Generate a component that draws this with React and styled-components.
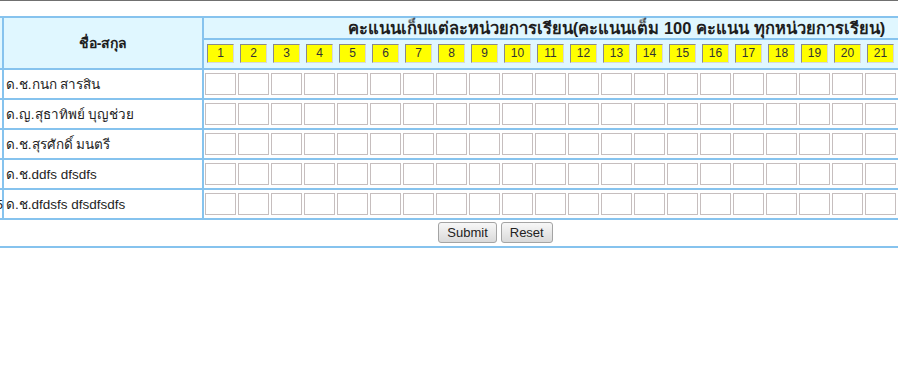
import styled, { createGlobalStyle } from "styled-components";

const GlobalStyle = createGlobalStyle`
  html, body {
    margin: 0;
    overflow: hidden;
    background: #ffffff;
  }
  body {
    font-family: Tahoma, "Liberation Sans", "Noto Sans", sans-serif;
    color: #1e1e1e;
  }
`;

const TopRule = styled.div`
  height: 1px;
  background: #707070;
  margin-bottom: 15px;
`;

const Wrap = styled.div`
  width: 1200px;
  margin-left: -40px;
`;

const Table = styled.table`
  border-collapse: collapse;
  border: 2px solid #86c3ee;
`;

const HeadCell = styled.th`
  background: #e0f7ff;
  border: 2px solid #86c3ee;
  padding: 0;
  font-weight: bold;
`;

const NumHead = styled(HeadCell)`
  width: 40px;
`;

const NameHead = styled(HeadCell)`
  width: 198px;
  font-size: 14px;
  text-align: center;
`;

const TitleHead = styled(HeadCell)`
  height: 20px;
  font-size: 16.5px;
  line-height: 20px;
  text-align: center;
  white-space: nowrap;
`;

const UnitHead = styled(HeadCell)`
  border-left: none;
  border-right: none;
  padding: 4px 3px 5px;
`;

const Badge = styled.span`
  display: block;
  box-sizing: border-box;
  width: 27px;
  height: 19px;
  background: #ffff00;
  border: 1px solid;
  border-color: #8a8a8a #d8d8d8 #d8d8d8 #8a8a8a;
  font-family: "Liberation Sans", Arial, sans-serif;
  font-size: 12px;
  font-weight: normal;
  line-height: 17px;
  text-align: center;
  color: #333;
`;

const Cell = styled.td`
  border: 2px solid #86c3ee;
  padding: 0;
  height: 28px;
`;

const NumCell = styled(Cell)`
  text-align: right;
  font-size: 13px;
  padding-right: 0;
  letter-spacing: -1px;
`;

const NameCell = styled(Cell)`
  font-size: 13.5px;
  padding-left: 2px;
  white-space: nowrap;
`;

const ScoreCell = styled(Cell)`
  width: 31px;
  border-left: none;
  border-right: none;
  padding: 0 1px;
`;

const ScoreInput = styled.input`
  display: block;
  box-sizing: border-box;
  width: 31px;
  height: 22px;
  margin: 0;
  padding: 0;
  border: 1px solid #c6bebe;
  background: #fff;
`;

const ActionCell = styled.td`
  border-top: 2px solid #86c3ee;
  border-bottom: 2px solid #86c3ee;
  padding: 2px 0 3px;
  text-align: center;
`;

const Button = styled.button`
  font-family: "Liberation Sans", Arial, sans-serif;
  font-size: 13px;
  height: 21px;
  padding: 0 8px;
  margin: 0 2px;
  color: #222;
  border: 1px solid #a4a4a4;
  border-radius: 3px;
  background: linear-gradient(#f7f7f7, #dadada);
`;

const UNITS = 25;
const students = [
  { no: "", name: "ด.ช.กนก สารสิน" },
  { no: "", name: "ด.ญ.สุธาทิพย์ บุญช่วย" },
  { no: "", name: "ด.ช.สุรศักดิ์ มนตรี" },
  { no: "", name: "ด.ช.ddfs dfsdfs" },
  { no: "5", name: "ด.ช.dfdsfs dfsdfsdfs" },
];

function App() {
  const units = Array.from({ length: UNITS }, (_, i) => i + 1);

  return (
    <>
      <GlobalStyle />
      <TopRule />
      <Wrap>
        <Table>
          <thead>
            <tr>
              <NumHead rowSpan={2}></NumHead>
              <NameHead rowSpan={2}>ชื่อ-สกุล</NameHead>
              <TitleHead colSpan={UNITS}>
                คะแนนเก็บแต่ละหน่วยการเรียน(คะแนนเต็ม 100 คะแนน ทุกหน่วยการเรียน)
              </TitleHead>
            </tr>
            <tr>
              {units.map((u) => (
                <UnitHead key={u}>
                  <Badge>{u}</Badge>
                </UnitHead>
              ))}
            </tr>
          </thead>
          <tbody>
            {students.map((s, r) => (
              <tr key={r}>
                <NumCell>{s.no}</NumCell>
                <NameCell>{s.name}</NameCell>
                {units.map((u) => (
                  <ScoreCell key={u}>
                    <ScoreInput type="text" />
                  </ScoreCell>
                ))}
              </tr>
            ))}
            <tr>
              <ActionCell colSpan={UNITS + 2}>
                <Button type="submit">Submit</Button>
                <Button type="reset">Reset</Button>
              </ActionCell>
            </tr>
          </tbody>
        </Table>
      </Wrap>
    </>
  );
}

export default App;
